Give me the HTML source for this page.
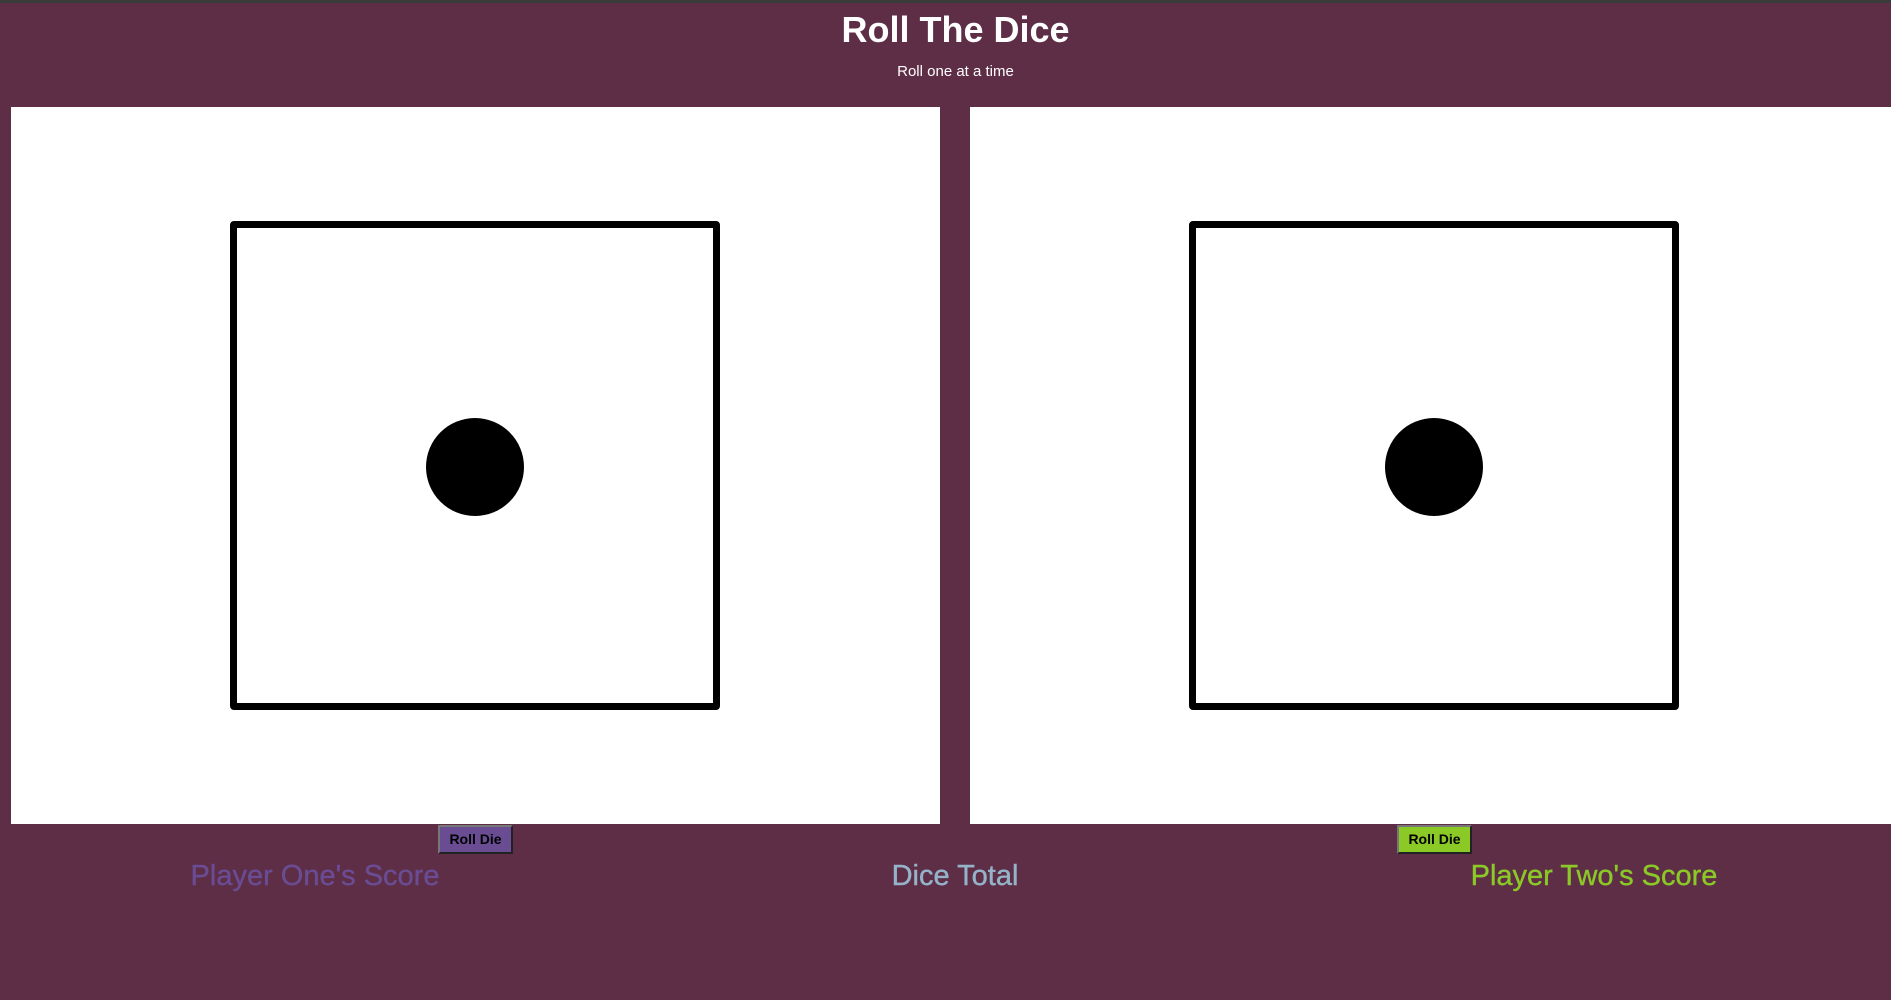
<!DOCTYPE html>
<html><head><meta charset="utf-8"><style>
*{margin:0;padding:0;box-sizing:border-box}
html,body{width:1891px;height:1000px;overflow:hidden;background:#5e2d46;font-family:"Liberation Sans",sans-serif;position:relative}
.topline{position:absolute;left:0;top:0;width:1891px;height:3px;background:#3a3a3a}
h1{position:absolute;left:10px;width:1891px;text-align:center;top:10px;font-size:36px;font-weight:600;color:#fff;line-height:40px}
.sub{position:absolute;left:10px;width:1891px;text-align:center;top:63px;font-size:15px;color:#fff;line-height:18px}
.panel{position:absolute;top:107px;height:717px;background:#fff}
.die{position:absolute;top:221px;width:490px;height:489px;border:7px solid #000;border-radius:4px}
.pip{position:absolute;width:98px;height:98px;border-radius:50%;background:#000;top:418px}
.btn{position:absolute;top:825px;height:29px;width:75px;border:2px outset #777;font-weight:700;font-size:14px;text-align:center;line-height:24px;color:#000}
.score{position:absolute;top:859px;font-size:29px;line-height:34px;white-space:nowrap;text-align:center;-webkit-text-stroke:0.4px currentColor}
</style></head><body>
<div class="topline"></div>
<h1>Roll The Dice</h1>
<div class="sub">Roll one at a time</div>
<div class="panel" style="left:11px;width:929px"></div>
<div class="panel" style="left:970px;width:921px"></div>
<div class="die" style="left:230px"></div>
<div class="die" style="left:1189px"></div>
<div class="pip" style="left:426px"></div>
<div class="pip" style="left:1385px"></div>
<div class="btn" style="left:438px;background:#6a4c93">Roll Die</div>
<div class="btn" style="left:1397px;background:#8ac926">Roll Die</div>
<div class="score" style="left:115px;width:400px;color:#6a4c93">Player One's Score</div>
<div class="score" style="left:755px;width:400px;color:#94b3c9">Dice Total</div>
<div class="score" style="left:1394px;width:400px;color:#8ac926">Player Two's Score</div>
</body></html>
